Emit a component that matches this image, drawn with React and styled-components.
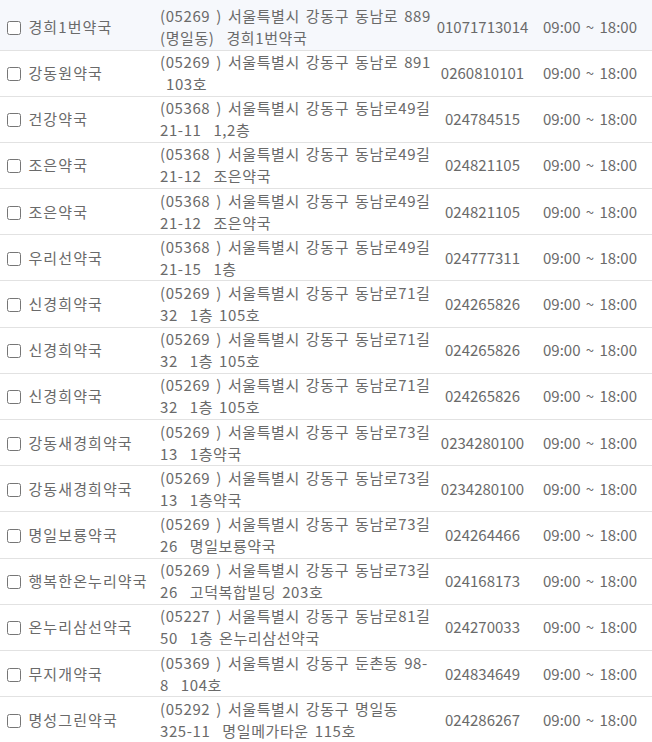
import React from 'react';
import styled, { createGlobalStyle } from 'styled-components';

const GlobalStyle = createGlobalStyle`
  html, body {
    margin: 0;
    padding: 0;
    background: #fff;
  }
  body {
    font-family: 'Noto Sans CJK KR', 'Noto Sans', sans-serif;
  }
`;

const A = '서울특별시 강동구';

const pharmacies = [
  { name: '경희1번약국', zip: '05269', addr: [`${A} 동남로 889`, '(명일동)  경희1번약국'], tel: '01071713014' },
  { name: '강동원약국', zip: '05269', addr: [`${A} 동남로 891`, ' 103호'], tel: '0260810101' },
  { name: '건강약국', zip: '05368', addr: [`${A} 동남로49길`, '21-11  1,2층'], tel: '024784515' },
  { name: '조은약국', zip: '05368', addr: [`${A} 동남로49길`, '21-12  조은약국'], tel: '024821105' },
  { name: '조은약국', zip: '05368', addr: [`${A} 동남로49길`, '21-12  조은약국'], tel: '024821105' },
  { name: '우리선약국', zip: '05368', addr: [`${A} 동남로49길`, '21-15  1층'], tel: '024777311' },
  { name: '신경희약국', zip: '05269', addr: [`${A} 동남로71길`, '32  1층 105호'], tel: '024265826' },
  { name: '신경희약국', zip: '05269', addr: [`${A} 동남로71길`, '32  1층 105호'], tel: '024265826' },
  { name: '신경희약국', zip: '05269', addr: [`${A} 동남로71길`, '32  1층 105호'], tel: '024265826' },
  { name: '강동새경희약국', zip: '05269', addr: [`${A} 동남로73길`, '13  1층약국'], tel: '0234280100' },
  { name: '강동새경희약국', zip: '05269', addr: [`${A} 동남로73길`, '13  1층약국'], tel: '0234280100' },
  { name: '명일보룡약국', zip: '05269', addr: [`${A} 동남로73길`, '26  명일보룡약국'], tel: '024264466' },
  { name: '행복한온누리약국', zip: '05269', addr: [`${A} 동남로73길`, '26  고덕복합빌딩 203호'], tel: '024168173' },
  { name: '온누리삼선약국', zip: '05227', addr: [`${A} 동남로81길`, '50  1층 온누리삼선약국'], tel: '024270033' },
  { name: '무지개약국', zip: '05369', addr: [`${A} 둔촌동 98-`, '8  104호'], tel: '024834649' },
  { name: '명성그린약국', zip: '05292', addr: [`${A} 명일동`, '325-11  명일메가타운 115호'], tel: '024286267' },
];

const Table = styled.table`
  width: 652px;
  border-collapse: collapse;
  table-layout: fixed;
  color: #6a6a6a;
  font-size: 15px;
  line-height: 22px;
`;

const Row = styled.tr`
  height: ${(p) => (p.$hover ? '50px' : '46.2px')};
  background: ${(p) => (p.$hover ? '#f6f8fc' : 'transparent')};
  border-bottom: 1px solid #e2e2e2;
`;

const Cell = styled.td`
  padding: ${(p) => (p.$hover ? '4px 0 0' : '0')};
  vertical-align: middle;
  white-space: nowrap;
  overflow: hidden;
  text-align: ${(p) => p.$align || 'left'};
`;

const NameCell = styled(Cell)`
  padding-left: 3px;
  letter-spacing: 1.1px;
`;

const AddrCell = styled(Cell)`
  padding-left: 3px;
  letter-spacing: 0.6px;
  word-spacing: 2px;
`;

const TimeCell = styled(Cell)`
  padding-right: 4px;
  word-spacing: 2px;
`;

const Check = styled.input.attrs({ type: 'checkbox' })`
  width: 14px;
  height: 14px;
  margin: 0 3px 0 4px;
  vertical-align: -2px;
`;

const Line = styled.span`
  display: block;
  white-space: pre;
`;

export default function App() {
  return (
    <>
      <GlobalStyle />
      <Table>
        <colgroup>
          <col style={{ width: 157 }} />
          <col style={{ width: 276 }} />
          <col style={{ width: 99 }} />
          <col />
        </colgroup>
        <tbody>
          {pharmacies.map((p, i) => (
            <Row key={i} $hover={i === 0}>
              <NameCell $hover={i === 0}>
                <Check /> {p.name}
              </NameCell>
              <AddrCell $hover={i === 0}>
                <Line>{`(${p.zip} ) ${p.addr[0]}`}</Line>
                <Line>{p.addr[1]}</Line>
              </AddrCell>
              <Cell $hover={i === 0} $align="center">
                {p.tel}
              </Cell>
              <TimeCell $hover={i === 0} $align="center">
                09:00 ~ 18:00
              </TimeCell>
            </Row>
          ))}
        </tbody>
      </Table>
    </>
  );
}
